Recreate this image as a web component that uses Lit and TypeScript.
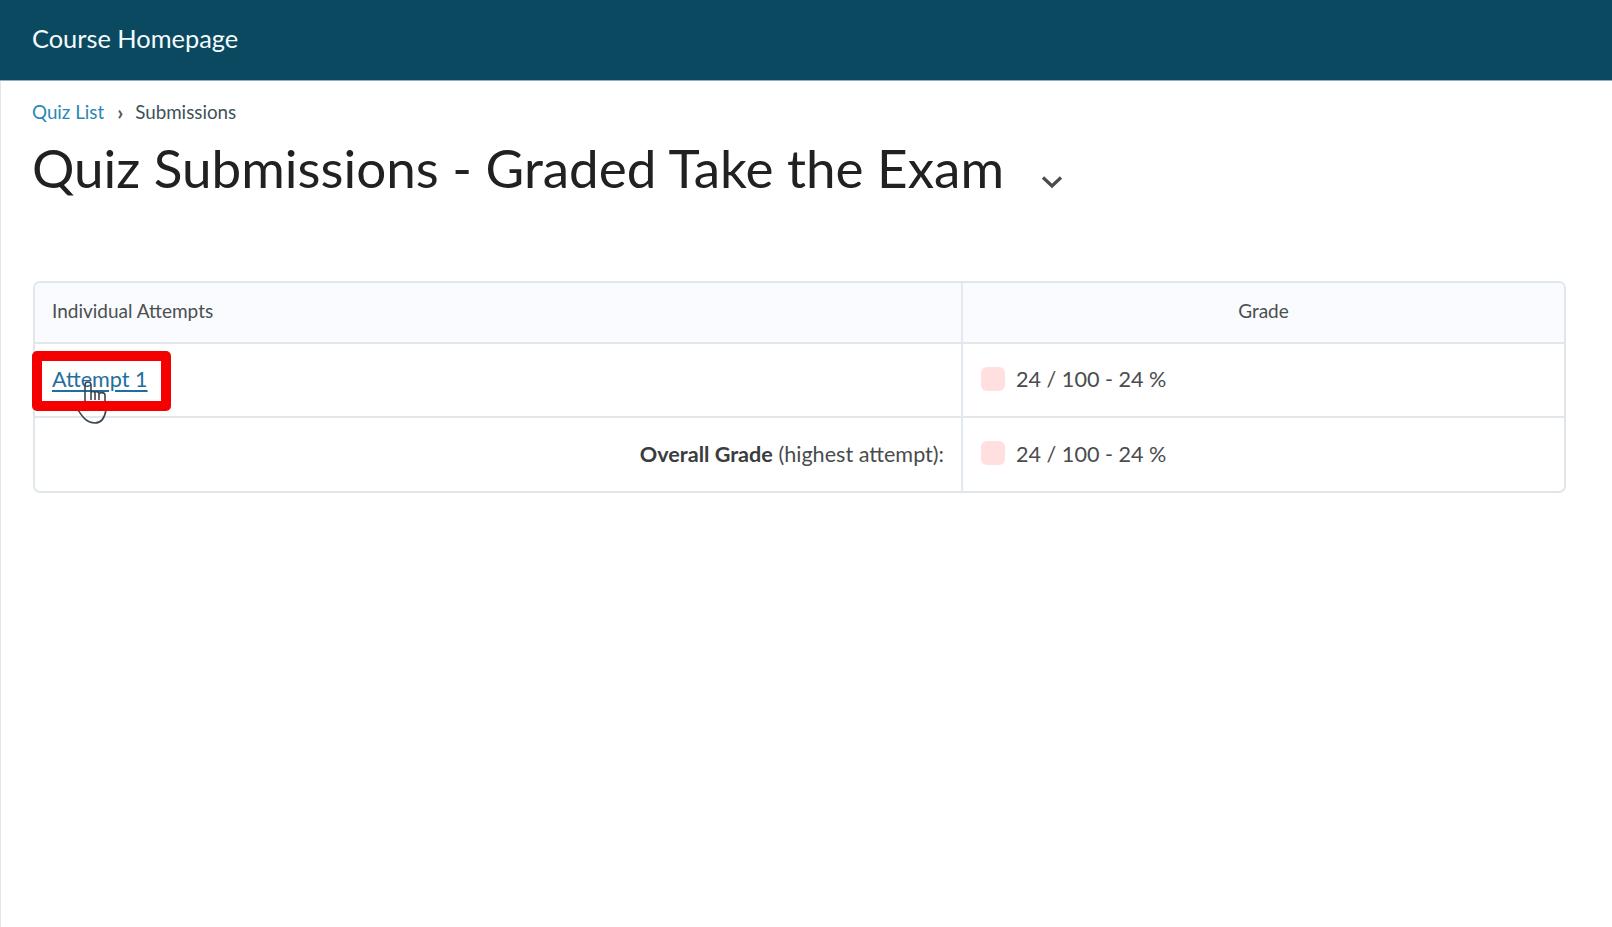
import { LitElement, html, css } from "lit";
import { customElement } from "lit/decorators.js";

@customElement("app-root")
export class AppRoot extends LitElement {
  static styles = css`
    :host { display: block; min-height: 927px; background: #fff; font-family: Lato, "Open Sans", sans-serif; color: #494c4e; position: relative; overflow: hidden; }
    .top { background: #0a4960; border-bottom: 1px solid #8fb0bf; display: flex; align-items: center; padding: 0 0 4px 32px; color: #f4fbfc; font-size: 25.4px; height: 76px; }
    .page { border-left: 1px solid #e6e6e6; padding: 0 46px 0 31px; height: 846px; box-sizing: border-box; }
    .crumbs { display: flex; align-items: center; padding-top: 20px; height: 22px; font-size: 18.8px; line-height: 22px; color: #3f5159; }
    .crumbs a { color: #2a87b4; }
    .sep { margin: 0 12px 0 13px; font-size: 21px; font-weight: 700; width: 6px; color: #555; }
    .title { display: flex; align-items: center; margin: 13px 0 0; height: 62px; font-size: 53px; font-weight: 400; color: #202122; }
    .title svg { margin: 30px 0 0 37px; }
    .table { margin: 83px 0 0 1px; width: 1533px; box-sizing: border-box; border: 2px solid #e1e6eb; border-radius: 7px; display: grid; grid-template-columns: 928px 1fr; overflow: hidden; }
    .cell { display: flex; align-items: center; box-sizing: border-box; padding: 0 18px; border-bottom: 2px solid #e3e6ea; }
    .left { border-right: 2px solid #e3e9f0; padding: 0 17px; }
    .head { height: 61px; background: #f9fbff; font-size: 19px; color: #4a4f50; padding-bottom: 5px; }
    .row { height: 74px; font-size: 21.6px; padding-bottom: 2px; }
    .last { border-bottom: 0; height: 73px; }
    .center { justify-content: center; }
    .right { justify-content: flex-end; }
    .link { color: #1f6f9e; text-decoration: underline; text-underline-offset: 3px; }
    b { font-weight: 700; color: #3a3c3e; }
    .swatch { width: 24px; height: 24px; border-radius: 6px; background: #ffdfe0; margin: -1px 11px 0 0; }
    .grade { color: #4a4c4e; }
    .hilite { position: absolute; left: 32px; top: 351px; width: 139px; height: 60px; box-sizing: border-box; border: 10px solid #f50000; border-radius: 5px; }
    .cursor { position: absolute; left: 76px; top: 380px; }
  `;

  render() {
    return html`
      <div class="top">Course Homepage</div>
      <div class="page">
        <div class="crumbs"><a>Quiz List</a><span class="sep">›</span><span>Submissions</span></div>
        <h1 class="title">Quiz Submissions - Graded Take the Exam
          <svg width="22" height="14" viewBox="0 0 22 14"><path d="M2 2.5 L11 11 L20 2.5" fill="none" stroke="#4a4d4f" stroke-width="3.2"/></svg>
        </h1>
        <div class="table">
          <div class="cell left head">Individual Attempts</div>
          <div class="cell head center">Grade</div>
          <div class="cell left row"><span class="link">Attempt 1</span></div>
          <div class="cell row"><span class="swatch"></span><span class="grade">24 / 100 - 24 %</span></div>
          <div class="cell left row last right"><span><b>Overall Grade</b> (highest attempt):</span></div>
          <div class="cell row last"><span class="swatch"></span><span class="grade">24 / 100 - 24 %</span></div>
        </div>
      </div>
      <svg class="cursor" width="34" height="46" viewBox="0 0 34 46" fill="none" stroke="#3f454c" stroke-width="1.6">
        <path d="M9 21 V5 C9 1 15 1 15 5 V20 M15 13 C15 11 19 11 19 13 V20 M19 13 C19 11 23 11 23 14 V20 M23 14 C23 12 29 12 29 15 V21"/>
        <path d="M2 30 C6 36 10 43 19 43 C26 43 29 36 30 30"/>
      </svg>
      <div class="hilite"></div>
    `;
  }
}
